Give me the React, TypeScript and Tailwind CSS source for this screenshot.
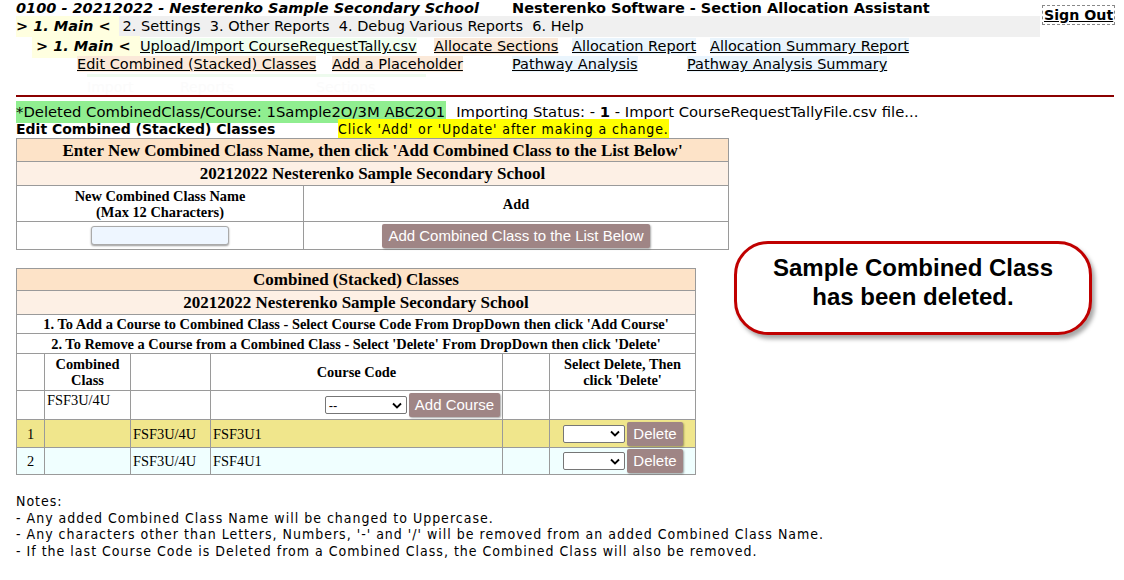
import React from "react";

const verdana = "font-['DejaVu_Sans',Verdana,sans-serif]";
const tahoma = "font-['DejaVu_Sans_Condensed','DejaVu_Sans',Tahoma,sans-serif]";
const serif = "font-['Liberation_Serif','Times_New_Roman',serif]";
const arial = "font-['Liberation_Sans',Arial,sans-serif]";

const cell = "border border-[#9a9a9a]";
const btn =
  "rounded-[2px] bg-[#9f8585] px-[6px] text-white shadow-[1px_1px_2px_rgba(0,0,0,0.35)] " +
  arial;

function Select({ value, width }: { value: string; width: string }) {
  return (
    <span
      className={`inline-flex h-[18px] items-center justify-between rounded-[2px] border border-[#767676] bg-white pl-[3px] pr-[4px] text-[13px] ${arial} ${width}`}
    >
      <span>{value}</span>
      <svg width="10" height="7" viewBox="0 0 10 7">
        <path d="M1 1.5 L5 5.5 L9 1.5" fill="none" stroke="#000" strokeWidth="1.8" />
      </svg>
    </span>
  );
}

export default function App() {
  return (
    <div className="h-[580px] w-[1124px] overflow-hidden bg-white text-black">
      {/* header */}
      <div className="flex">
        <div className="ml-4 w-[1024px]">
          <div className={`flex h-[16px] items-center text-[14.5px] font-bold leading-none ${verdana}`}>
            <span className="w-[496px] italic">0100 - 20212022 - Nesterenko Sample Secondary School</span>
            <span>Nesterenko Software - Section Allocation Assistant</span>
          </div>
          <div className={`flex h-[21px] items-center bg-[#f0f0f0] text-[14.5px] ${verdana}`}>
            <span className="flex h-full items-center bg-[#ffffe0] pr-[8px] font-bold italic">&gt; 1. Main &lt;</span>
            <span className="ml-[4px] whitespace-pre">2. Settings  3. Other Reports  4. Debug Various Reports  6. Help</span>
          </div>
        </div>
        <div className="ml-[2px] mt-[2px] h-[20px]">
          <span className={`inline-block border border-dashed border-[#888] px-[1px] text-[14.2px] font-bold leading-[18px] underline ${verdana}`}>
            Sign Out
          </span>
        </div>
      </div>

      <div className={`mt-[1px] flex h-[18px] items-center text-[14.5px] ${verdana}`}>
        <span className="ml-[32px] w-[108px] bg-[#ffffe0] pl-[4px] font-bold italic">&gt; 1. Main &lt;</span>
        <span className="w-[294px]">
          <span className="bg-[#f0fff0] underline">Upload/Import CourseRequestTally.csv</span>
        </span>
        <span className="w-[138px]">
          <span className="bg-[#fbe9d9] underline">Allocate Sections</span>
        </span>
        <span className="w-[138px]">
          <span className="bg-[#eaf5fd] underline">Allocation Report</span>
        </span>
        <span>
          <span className="bg-[#eaf5fd] underline">Allocation Summary Report</span>
        </span>
      </div>
      <div className={`flex h-[18px] items-center text-[14.5px] ${verdana}`}>
        <span className="ml-[77px] w-[255px]">
          <span className="bg-[#fbe9d9] underline">Edit Combined (Stacked) Classes</span>
        </span>
        <span className="w-[180px]">
          <span className="bg-[#fbe9d9] underline">Add a Placeholder</span>
        </span>
        <span className="w-[175px]">
          <span className="bg-[#eaf5fd] underline">Pathway Analysis</span>
        </span>
        <span>
          <span className="bg-[#eaf5fd] underline">Pathway Analysis Summary</span>
        </span>
      </div>
      <div className={`flex h-[16px] items-start text-[14px] text-[#fbfbfb] ${verdana}`}>
        <span className="ml-[87px] w-[93px] border-t-[3px] border-[#eefbee]">Import</span>
        <span className="w-[136px] border-t-[3px] border-[#eefbee]">Reports</span>
        <span className="w-[110px] border-t-[3px] border-[#eefbee]">Sections</span>
      </div>

      <div className="ml-4 mr-[10px] mt-[5px] h-[2px] bg-[#8b0000]" />

      {/* status */}
      <div className={`ml-4 mt-[6px] flex h-[18px] items-center text-[14.8px] ${verdana}`}>
        <span className="bg-[#90ee90] pr-[1px]">*Deleted CombinedClass/Course: 1Sample2O/3M ABC2O1</span>
        <span className="ml-[10px]">
          Importing Status: - <b>1</b> - Import CourseRequestTallyFile.csv file...
        </span>
      </div>
      <div className="ml-4 flex h-[17px] items-center text-[14px]">
        <span className={`w-[322px] font-bold ${verdana}`}>Edit Combined (Stacked) Classes</span>
        <span className={`bg-[#ffff00] tracking-[0.9px] ${tahoma}`}>Click 'Add' or 'Update' after making a change.</span>
      </div>

      <div className="flex items-start">
        <div>
          {/* add table */}
          <table className={`ml-4 w-[713px] border-collapse text-center ${serif}`}>
            <tbody>
              <tr className="h-[23px] bg-[#fde3c8] text-[17px] font-bold leading-[19px]">
                <td colSpan={2} className={cell}>
                  Enter New Combined Class Name, then click 'Add Combined Class to the List Below'
                </td>
              </tr>
              <tr className="h-[24px] bg-[#fdf0e5] text-[17px] font-bold leading-[19px]">
                <td colSpan={2} className={cell}>
                  20212022 Nesterenko Sample Secondary School
                </td>
              </tr>
              <tr className="h-[36px] text-[14.4px] font-bold leading-[16px]">
                <td className={`${cell} w-[287px]`}>
                  New Combined Class Name
                  <br />
                  (Max 12 Characters)
                </td>
                <td className={cell}>Add</td>
              </tr>
              <tr className="h-[28px]">
                <td className={`${cell} leading-none`}>
                  <span className="inline-block h-[19px] w-[138px] translate-y-[1px] rounded-[3px] border border-[#aaa] bg-[#eef6ff] shadow-[0_1px_2px_rgba(0,0,0,0.4)]" />
                </td>
                <td className={`${cell} leading-none`}>
                  <span className={`inline-block h-[24px] text-[15px] leading-[24px] ${btn}`}>
                    Add Combined Class to the List Below
                  </span>
                </td>
              </tr>
            </tbody>
          </table>

          {/* combined classes table */}
          <table className={`ml-4 mt-[18px] w-[680px] border-collapse text-center ${serif}`}>
            <tbody>
              <tr className="h-[22px] bg-[#fde3c8] text-[17px] font-bold leading-[19px]">
                <td colSpan={6} className={cell}>
                  Combined (Stacked) Classes
                </td>
              </tr>
              <tr className="h-[24px] bg-[#fdf0e5] text-[17px] font-bold leading-[19px]">
                <td colSpan={6} className={cell}>
                  20212022 Nesterenko Sample Secondary School
                </td>
              </tr>
              <tr className="h-[19px] text-[14.4px] font-bold leading-[16px]">
                <td colSpan={6} className={cell}>
                  1. To Add a Course to Combined Class - Select Course Code From DropDown then click 'Add Course'
                </td>
              </tr>
              <tr className="h-[20px] text-[14.4px] font-bold leading-[16px]">
                <td colSpan={6} className={cell}>
                  2. To Remove a Course from a Combined Class - Select 'Delete' From DropDown then click 'Delete'
                </td>
              </tr>
              <tr className="h-[37px] text-[14.4px] font-bold leading-[16px]">
                <td className={`${cell} w-[28px]`} />
                <td className={`${cell} w-[86px]`}>
                  Combined
                  <br />
                  Class
                </td>
                <td className={`${cell} w-[80px]`} />
                <td className={`${cell} w-[292px]`}>Course Code</td>
                <td className={`${cell} w-[47px]`} />
                <td className={cell}>
                  Select Delete, Then
                  <br />
                  click 'Delete'
                </td>
              </tr>
              <tr className="h-[29px] text-[14.4px]">
                <td className={cell} />
                <td className={`${cell} pl-[2px] text-left align-top leading-[18px]`}>FSF3U/4U</td>
                <td className={cell} />
                <td className={`${cell} pr-[2px] text-right leading-none`}>
                  <span className="inline-flex items-center gap-[2px] align-middle">
                    <Select value="--" width="w-[82px]" />
                    <span className={`inline-block h-[24px] text-[15px] leading-[24px] ${btn}`}>Add Course</span>
                  </span>
                </td>
                <td className={cell} />
                <td className={cell} />
              </tr>
              {[
                { n: "1", code: "FSF3U1", bg: "bg-[#f0e68c]", h: "h-[28px]" },
                { n: "2", code: "FSF4U1", bg: "bg-[#f0ffff]", h: "h-[27px]" },
              ].map((r) => (
                <tr key={r.n} className={`${r.h} text-[14.4px] leading-[18px] ${r.bg}`}>
                  <td className={cell}>{r.n}</td>
                  <td className={cell} />
                  <td className={`${cell} pl-[2px] text-left`}>FSF3U/4U</td>
                  <td className={`${cell} pl-[2px] text-left`}>{r.code}</td>
                  <td className={cell} />
                  <td className={`${cell} leading-none`}>
                    <span className="inline-flex items-center gap-[2px] pl-[1px] align-middle">
                      <Select value="" width="w-[62px]" />
                      <span className={`inline-block h-[24px] text-[15px] leading-[24px] ${btn}`}>Delete</span>
                    </span>
                  </td>
                </tr>
              ))}
            </tbody>
          </table>
        </div>

        {/* callout */}
        <div className="ml-[5px] mt-[103px] flex h-[94px] w-[358px] flex-col items-center justify-center rounded-[34px] border-[3px] border-[#c00000] bg-white pb-[12px] shadow-[3px_4px_4px_rgba(0,0,0,0.35)]">
          <div className={`text-center text-[24px] font-bold leading-[29px] ${arial}`}>
            Sample Combined Class
            <br />
            has been deleted.
          </div>
        </div>
      </div>

      {/* notes */}
      <div className={`ml-4 mt-[18px] text-[14px] leading-[16.7px] tracking-[1px] ${tahoma}`}>
        <div>Notes:</div>
        <div>- Any added Combined Class Name will be changed to Uppercase.</div>
        <div>- Any characters other than Letters, Numbers, '-' and '/' will be removed from an added Combined Class Name.</div>
        <div>- If the last Course Code is Deleted from a Combined Class, the Combined Class will also be removed.</div>
      </div>
    </div>
  );
}
